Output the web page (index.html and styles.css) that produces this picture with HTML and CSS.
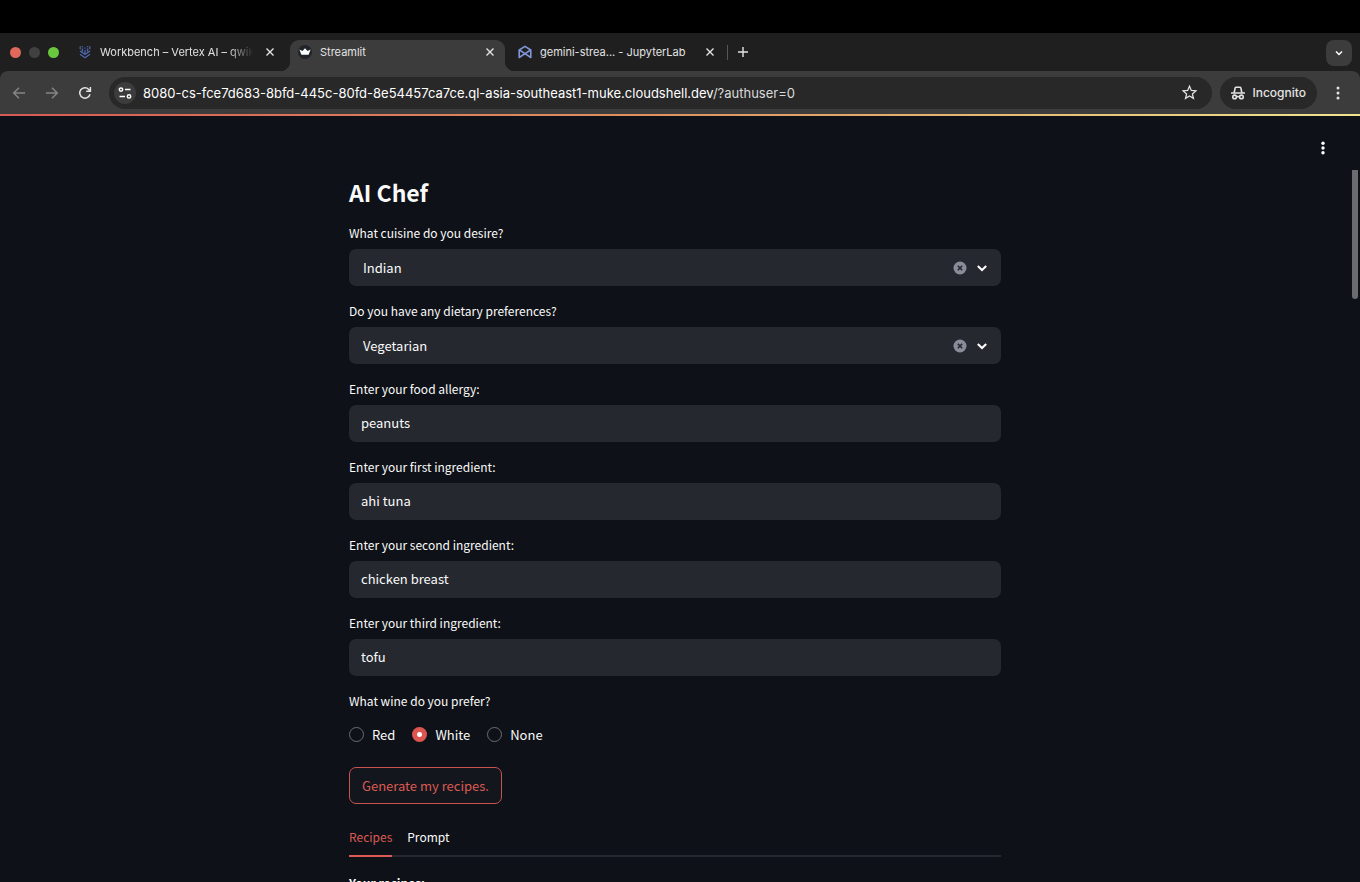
FILE: index.html
```html
<!DOCTYPE html>
<html lang="en">
<head>
<meta charset="utf-8">
<meta name="viewport" content="width=device-width, initial-scale=1">
<title>Streamlit</title>
<link rel="stylesheet" href="styles.css">
</head>
<body>
<div class="topbar"></div>
<header class="browser">
  <div class="tabstrip">
    <div class="lights">
      <span class="light light-close"></span>
      <span class="light light-min"></span>
      <span class="light light-max"></span>
    </div>
    <div class="tab">
      <svg class="favicon" viewBox="0 0 14 14" fill="none" stroke="#4f68ad" stroke-width="1.3"><path d="M2 6l5 3.4L12 6M2 9.2l5 3.6 5-3.6M4.4 3.4v3M7 5v3M9.6 3.4v3"/><path d="M2.2 1.2v3M11.8 1.2v3M4.4 1v1.2M7 2.4v1.3M9.6 1v1.2" stroke="#4a63a4"/></svg>
      <span class="tab-title fade">Workbench – Vertex AI – qwik</span>
      <button class="tab-close" aria-label="Close tab"><svg viewBox="0 0 10 10"><path d="M1.5 1.5l7 7M8.5 1.5l-7 7"/></svg></button>
    </div>
    <div class="tab active">
      <svg class="favicon" viewBox="0 0 14 14"><circle cx="7" cy="7" r="7" fill="#20242b"/><path d="M1.4 4.6l3.1 1.5L7 3.2l2.5 2.9 3.1-1.5-2 5.2H3.4z" fill="#fff"/></svg>
      <span class="tab-title">Streamlit</span>
      <button class="tab-close" aria-label="Close tab"><svg viewBox="0 0 10 10"><path d="M1.5 1.5l7 7M8.5 1.5l-7 7"/></svg></button>
    </div>
    <div class="tab last">
      <svg class="favicon" viewBox="0 0 14 14" fill="none" stroke="#8195d8" stroke-width="1.6" stroke-linejoin="round"><path d="M1.2 12.5V5L7 1.4 12.8 5v7.5L7 8.7z"/><path d="M1.4 5L7 8.7 12.6 5"/></svg>
      <span class="tab-title">gemini-strea... - JupyterLab</span>
      <button class="tab-close" aria-label="Close tab"><svg viewBox="0 0 10 10"><path d="M1.5 1.5l7 7M8.5 1.5l-7 7"/></svg></button>
    </div>
    <button class="new-tab" aria-label="New tab"><svg viewBox="0 0 12 12"><path d="M6 1v10M1 6h10"/></svg></button>
    <button class="tab-search" aria-label="Search tabs"><svg viewBox="0 0 10 10"><path d="M2 3.5l3 3 3-3"/></svg></button>
  </div>
  <div class="toolbar">
    <button class="nav dim" aria-label="Back"><svg viewBox="0 0 14 14"><path d="M13 7H2M7 1.7L1.7 7 7 12.3"/></svg></button>
    <button class="nav dim" aria-label="Forward"><svg viewBox="0 0 14 14"><path d="M1 7h11M7 1.7L12.3 7 7 12.3"/></svg></button>
    <button class="nav" aria-label="Reload"><svg viewBox="0 0 14 14"><path d="M12 8.2A5.2 5.2 0 1 1 10.8 3.4L12.3 5M12.4 1v4.2H8.2"/></svg></button>
    <div class="omnibox">
      <button class="site-info" aria-label="Site information"><svg viewBox="0 0 14 14"><circle cx="3" cy="3.6" r="1.7"/><path d="M7 3.6h5.5M1.5 10.4H7"/><circle cx="11" cy="10.4" r="1.7"/></svg></button>
      <span class="url">8080-cs-fce7d683-8bfd-445c-80fd-8e54457ca7ce.ql-asia-southeast1-muke.cloudshell.dev<span class="path">/?authuser=0</span></span>
      <button class="star" aria-label="Bookmark"><svg viewBox="0 0 14 14"><path d="M7 1.1l1.7 4 4.3.4-3.3 2.8 1 4.2L7 10.3l-3.7 2.2 1-4.2L1 5.5l4.3-.4z"/></svg></button>
    </div>
    <div class="incognito">
      <svg viewBox="0 0 14 14"><path d="M0 7h14M3.2 6.5l.9-4.4q.2-.8 1-.8h3.8q.8 0 1 .8l.9 4.4"/><circle cx="3.6" cy="10.9" r="1.8"/><circle cx="10.4" cy="10.9" r="1.8"/><path d="M5.4 10.6h3.2"/></svg>
      <span>Incognito</span>
    </div>
    <button class="dots" aria-label="Chrome menu"><svg viewBox="0 0 4 14"><circle cx="2" cy="2" r="1.5"/><circle cx="2" cy="7" r="1.5"/><circle cx="2" cy="12" r="1.5"/></svg></button>
  </div>
</header>
<div class="decoration"></div>
<main class="app">
  <button class="dots app-menu" aria-label="App menu"><svg viewBox="0 0 4 14"><circle cx="2" cy="2.3" r="1.7"/><circle cx="2" cy="7" r="1.7"/><circle cx="2" cy="11.7" r="1.7"/></svg></button>
  <div class="scrollbar"></div>
  <div class="block">
    <h1>AI Chef</h1>
    <form class="fields">
      <div class="field">
        <label for="cuisine">What cuisine do you desire?</label>
        <div class="select">
          <select id="cuisine"><option>Indian</option></select>
          <div class="select-icons">
            <svg class="clear" viewBox="0 0 14 14"><circle cx="7" cy="7" r="6.5" fill="#8a8c99"/><path d="M4.8 4.8l4.4 4.4M9.2 4.8L4.8 9.2" stroke="#262730" stroke-width="1.6"/></svg>
            <svg class="chevron" viewBox="0 0 12 12"><path d="M1.8 4L6 8l4.2-4"/></svg>
          </div>
        </div>
      </div>
      <div class="field">
        <label for="diet">Do you have any dietary preferences?</label>
        <div class="select">
          <select id="diet"><option>Vegetarian</option></select>
          <div class="select-icons">
            <svg class="clear" viewBox="0 0 14 14"><circle cx="7" cy="7" r="6.5" fill="#8a8c99"/><path d="M4.8 4.8l4.4 4.4M9.2 4.8L4.8 9.2" stroke="#262730" stroke-width="1.6"/></svg>
            <svg class="chevron" viewBox="0 0 12 12"><path d="M1.8 4L6 8l4.2-4"/></svg>
          </div>
        </div>
      </div>
      <div class="field">
        <label for="allergy">Enter your food allergy:</label>
        <input class="text" id="allergy" type="text" value="peanuts">
      </div>
      <div class="field">
        <label for="first">Enter your first ingredient:</label>
        <input class="text" id="first" type="text" value="ahi tuna">
      </div>
      <div class="field">
        <label for="second">Enter your second ingredient:</label>
        <input class="text" id="second" type="text" value="chicken breast">
      </div>
      <div class="field">
        <label for="third">Enter your third ingredient:</label>
        <input class="text" id="third" type="text" value="tofu">
      </div>
      <fieldset>
        <legend>What wine do you prefer?</legend>
        <div class="radios">
          <label class="radio"><input type="radio" name="wine">Red</label>
          <label class="radio"><input type="radio" name="wine" checked>White</label>
          <label class="radio"><input type="radio" name="wine">None</label>
        </div>
      </fieldset>
      <button class="generate" type="button">Generate my recipes.</button>
    </form>
    <div class="tabs" role="tablist">
      <button class="apptab selected" role="tab" aria-selected="true">Recipes</button>
      <button class="apptab" role="tab" aria-selected="false">Prompt</button>
    </div>
    <p class="result">Your recipes:</p>
  </div>
</main>
</body>
</html>
```
FILE: styles.css
```css
* { box-sizing: border-box; }
body {
  margin: 0;
  height: 100vh;
  display: flex;
  flex-direction: column;
  overflow: hidden;
  background: #0e1117;
  color: #fafafa;
  font-family: "Noto Sans CJK SC", "Noto Sans", sans-serif;
  font-size: 13px;
}
button, input, select { font: inherit; color: inherit; }
button { border: 0; padding: 0; background: none; display: flex; align-items: center; justify-content: center; }
svg { display: block; flex: none; }

.topbar { flex: none; height: 33px; background: #000; }
.browser { flex: none; background: #1f1f1f; font-family: Inter, "Liberation Sans", sans-serif; color: #e3e3e3; }

.tabstrip { display: flex; align-items: flex-end; height: 38px; padding: 0 8px 0 10px; }
.lights { display: flex; gap: 8px; align-items: center; height: 38px; width: 60px; }
.light { width: 11px; height: 11px; border-radius: 50%; }
.light-close { background: #e0695c; }
.light-min { background: #404140; }
.light-max { background: #69c63f; }
.tab { display: flex; align-items: center; width: 220px; height: 31px; padding: 0 14px 7px 8px; font-size: 11px; }
.favicon { width: 14px; height: 14px; margin-right: 8px; }
.tab-title { flex: 1; white-space: nowrap; }
.fade { mask-image: linear-gradient(to right, #000 82%, transparent 99%); }
.tab-close { width: 12px; height: 16px; margin-left: 10px; }
.tab-close svg { width: 10px; height: 10px; fill: none; stroke: #e3e3e3; stroke-width: 1.4; }
.active { position: relative; width: 215px; padding-right: 9px; background: #3c3c3c; border-radius: 9px 9px 0 0; }
.active::before, .active::after { content: ""; position: absolute; bottom: 0; width: 9px; height: 9px; }
.active::before { right: 100%; background: radial-gradient(circle at 0 0, transparent 9px, #3c3c3c 9px); }
.active::after { left: 100%; background: radial-gradient(circle at 100% 0, transparent 9px, #3c3c3c 9px); }
.last { padding-left: 13px; padding-right: 12px; width: 223px; position: relative; }
.last::after { content: ""; position: absolute; right: 0; top: 5px; width: 1px; height: 15px; background: #555; }
.new-tab { width: 30px; height: 25px; margin-bottom: 7px; }
.new-tab svg { width: 12px; height: 12px; stroke: #e3e3e3; stroke-width: 1.4; }
.tab-search { width: 26px; height: 26px; margin: 0 0 5px auto; border-radius: 8px; background: #3c3c3c; }
.tab-search svg { width: 10px; height: 10px; fill: none; stroke: #fff; stroke-width: 1.5; }

.toolbar { display: flex; align-items: center; height: 43px; padding: 0 12px 0 8px; background: #3c3c3c; border-radius: 8px 8px 0 0; }
.nav { width: 21px; height: 30px; margin-right: 12px; }
.nav svg { width: 14px; height: 14px; fill: none; stroke: #e3e3e3; stroke-width: 1.5; }
.dim svg { stroke: #858585; }
.omnibox { flex: 1; display: flex; align-items: center; height: 32px; margin-left: 2px; padding: 0 12px 0 5px; border-radius: 16px; background: #282828; }
.site-info { width: 22px; height: 22px; border-radius: 50%; background: #3c3c3c; }
.site-info svg { width: 14px; height: 14px; fill: none; stroke: #fff; stroke-width: 1.5; }
.url { flex: 1; margin-left: 7px; font-size: 13px; white-space: nowrap; overflow: hidden; color: #fff; }
.path { color: #dadada; }
.star { width: 22px; height: 22px; }
.star svg { width: 15px; height: 15px; fill: none; stroke: #e3e3e3; stroke-width: 1.2; }
.incognito { display: flex; align-items: center; gap: 7px; height: 32px; margin-left: 8px; padding: 0 11px; border-radius: 16px; background: #282828; font-size: 12px; font-weight: 500; }
.incognito svg { width: 14px; height: 14px; fill: none; stroke: #e3e3e3; stroke-width: 1.6; }
.dots { width: 20px; height: 24px; margin-left: 11px; }
.dots svg { width: 4px; height: 14px; fill: #e3e3e3; }

.decoration { flex: none; height: 2px; background: linear-gradient(to right, #d75a55, #df9561 50%, #eee58d); }
.app { position: relative; flex: 1; min-height: 0; overflow: hidden; padding: 59px 10px 0 0; }
.app-menu { position: absolute; right: 27px; top: 20px; }
.app-menu svg { fill: #fff; }
.scrollbar { position: absolute; right: 2px; top: 54px; width: 6px; height: 129px; background: #6b6c6f; border-radius: 0 0 3px 3px; }
.block { max-width: 652px; margin: 0 auto; }
h1 { margin: 0 0 14px; font-size: 23px; line-height: 34px; font-weight: 700; }
.field { height: 78px; }
.field > label, legend { display: block; height: 20px; margin-bottom: 6px; padding: 0; font-size: 12px; line-height: 20px; }
.text, select { display: block; width: 100%; height: 37px; border: 0; border-radius: 7px; background: #262830; outline: 0; }
.text { padding: 0 12px 2px; }
.select { position: relative; }
select { appearance: none; padding: 0 14px 1px; }
.select-icons { position: absolute; top: 0; right: 13px; height: 37px; display: flex; align-items: center; gap: 9px; pointer-events: none; }
.clear { width: 14px; height: 14px; }
.chevron { width: 12px; height: 12px; fill: none; stroke: #fff; stroke-width: 2; }
fieldset { margin: 0; padding: 0; border: 0; min-width: 0; }
.radios { display: flex; gap: 17px; padding-top: 7px; }
.radio { display: flex; align-items: center; height: 20px; gap: 8px; }
.radio input { appearance: none; width: 15px; height: 15px; margin: 0; border: 1px solid #6b6d73; border-radius: 50%; }
.radio input:checked { border: 0; background: radial-gradient(circle, #fff 2px, #dd5550 3px); }
.generate { height: 37px; margin-top: 23px; padding: 0 12px; border: 1px solid #c9534f; border-radius: 7px; background: #13161d; color: #dd5a52; }
.tabs { display: flex; gap: 15px; margin-top: 14px; border-bottom: 2px solid #262730; }
.apptab { height: 39px; margin-bottom: -2px; padding-bottom: 0; border-bottom: 2px solid transparent; font-size: 12px; }
.selected { color: #dd5a52; border-color: #dd5a52; }
.result { margin: 16px 0 0; font-size: 12px; line-height: 20px; font-weight: 700; }
```
